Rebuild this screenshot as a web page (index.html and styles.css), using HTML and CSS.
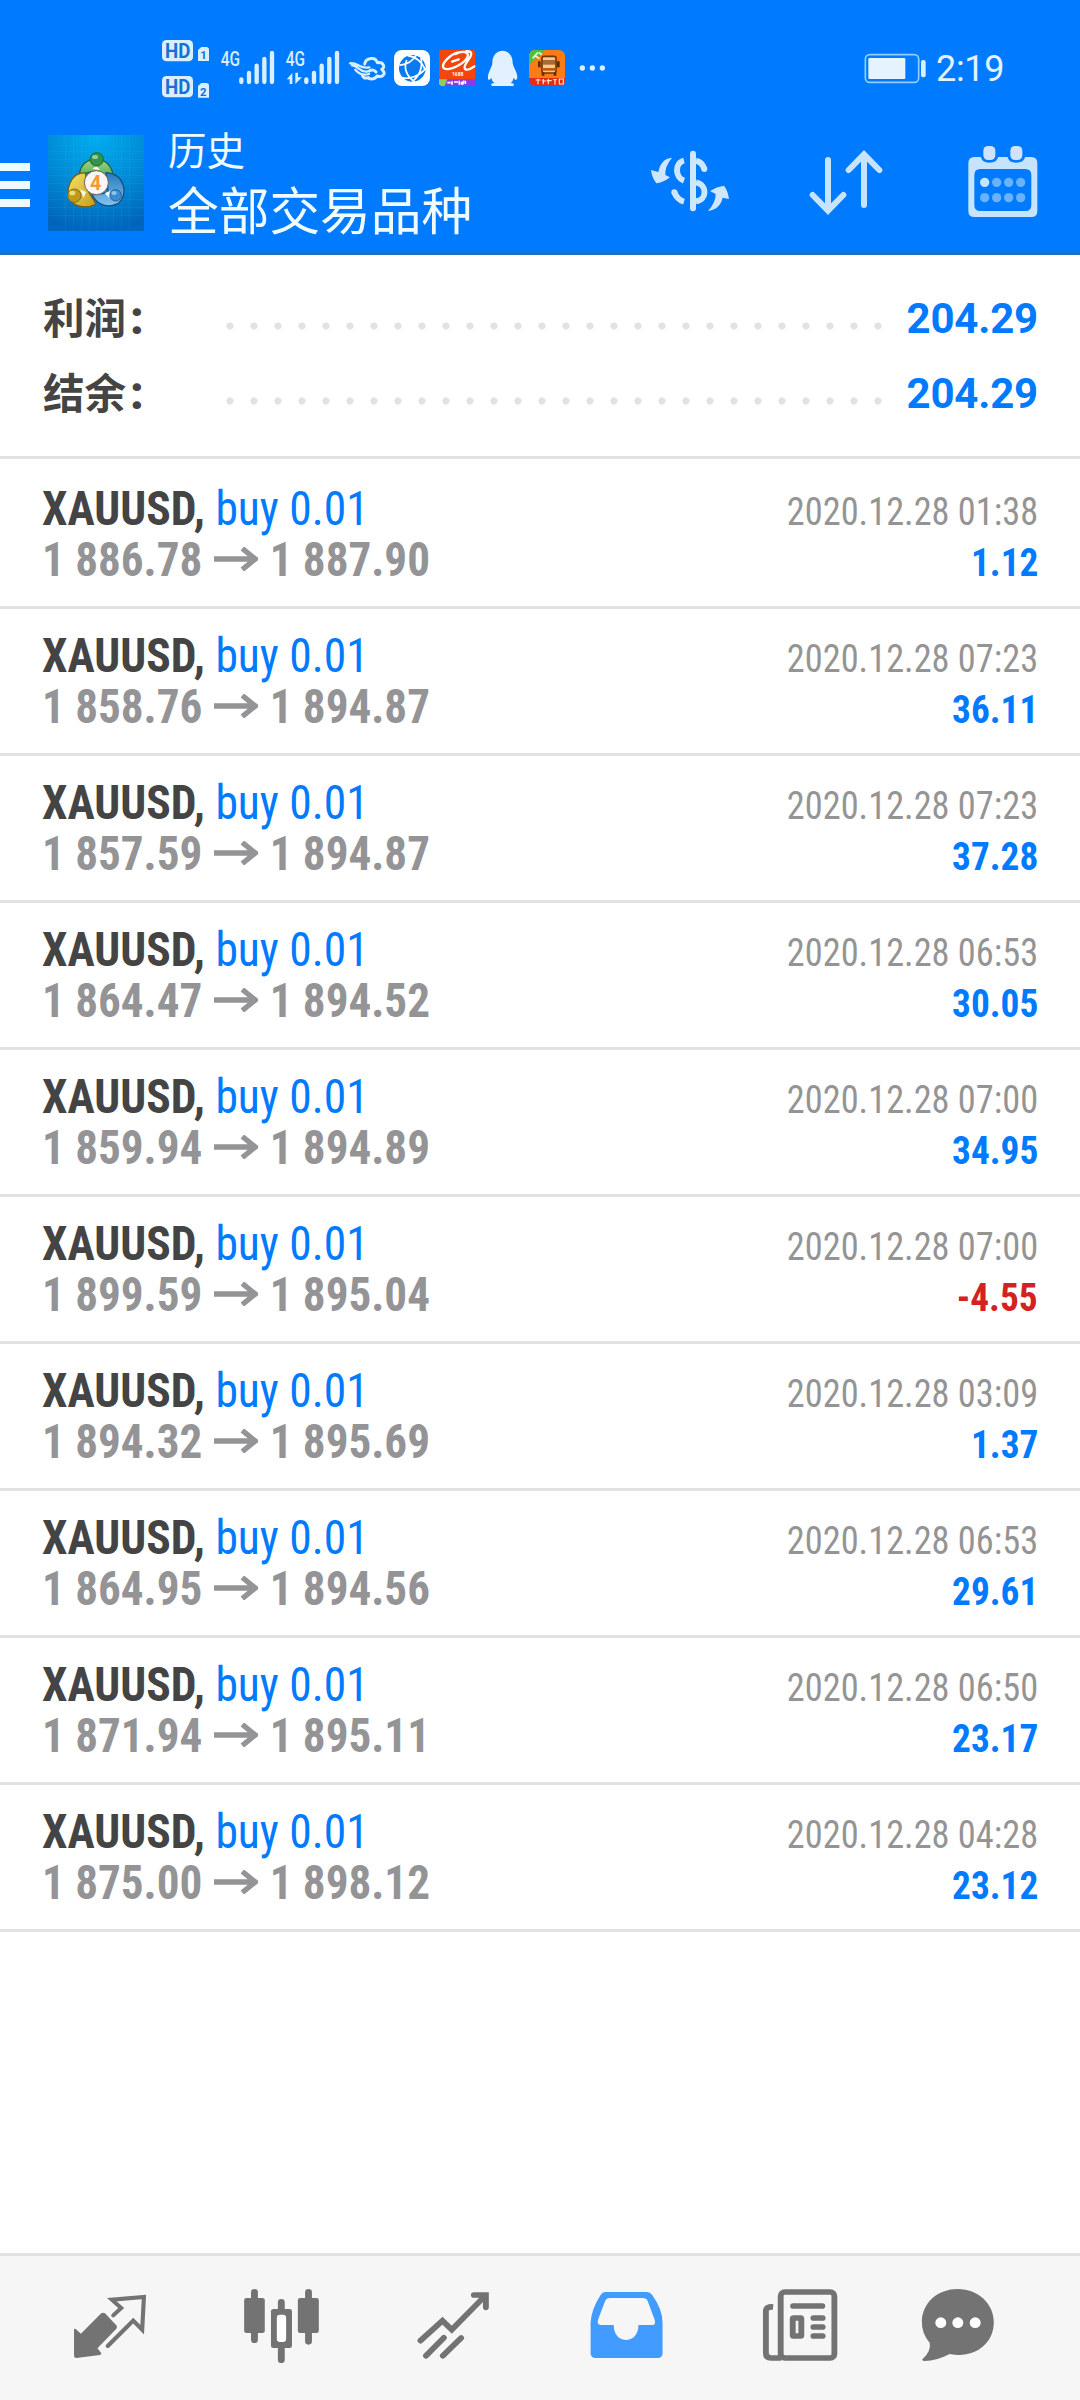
FILE: index.html
```html
<!DOCTYPE html>
<html lang="zh-CN">
<head>
<meta charset="utf-8">
<title>历史</title>
<link rel="stylesheet" href="styles.css">
</head>
<body>
<svg width="0" height="0" class="defs"><symbol id="arrow" viewBox="0 0 45 24" preserveAspectRatio="none"><path d="M0 12H41M28.500 1.500L41.500 12L28.500 22.500" fill="none" stroke="#949497" stroke-width="5.400"/></symbol></svg>
<header class="top">
  <div class="status">
    <svg class="st-hd" width="53" height="80" viewBox="30 0 159 240">
      <rect x="36" y="30" width="93" height="64" rx="13" fill="#d9efff"/>
      <rect x="36" y="138" width="93" height="64" rx="13" fill="#d9efff"/>
      <path d="M144 60l10-9h15q8 0 8 8v34h-33zM144 168l10-9h15q8 0 8 8v36h-33z" fill="#d9efff"/>
      <g class="hd-text"><text x="45" y="83" font-size="58" textLength="76" lengthAdjust="spacingAndGlyphs">HD</text><text x="45" y="191" font-size="58" textLength="76" lengthAdjust="spacingAndGlyphs">HD</text><text x="151" y="88" font-size="34">1</text><text x="150" y="197" font-size="34">2</text></g>
    </svg>
    <svg class="st-sig1" width="58" height="80" viewBox="204 0 174 240">
      <text class="net" x="212" y="107" font-size="60" textLength="58" lengthAdjust="spacingAndGlyphs">4G</text>
      <path class="bars" d="M274 148v8M297 129v27M320 107v49M343 87v69M366 69v87"/>
    </svg>
    <svg class="st-sig2" width="57" height="80" viewBox="402 0 171 240">
      <text class="net" x="407" y="107" font-size="60" textLength="58" lengthAdjust="spacingAndGlyphs">4G</text>
      <path class="bars" d="M469 148v8M492 129v27M515 107v49M538 87v69M561 69v87"/>
      <path d="M410 148l17-19v33h-8v-14zM436 128h8v14l12 0l-20 20z" fill="#d9efff"/>
    </svg>
    <svg class="st-wing" width="38" height="80" viewBox="594 0 114 240" fill="none" stroke="#d9efff" stroke-width="7" stroke-linecap="round" stroke-linejoin="round">
      <path d="M600 100c25-3 30 19 58 12M606 106c20 0 22 24 48 18M616 119c12 14 24 18 41 13"/>
      <path d="M644 102c4-18 32-24 38-4c20-4 24 16 13 20c15 12 4 26-14 20c-7 12-24 10-26 5c-11 4-18-2-18-8M658 123c8-5 15-3 20 3" stroke-width="9"/>
    </svg>
    <svg class="st-web" width="38" height="80" viewBox="159 0 114 240">
      <rect x="162" y="60" width="108" height="108" rx="24" fill="#fff"/>
      <circle cx="217" cy="115" r="40" fill="#0a7af0"/>
      <path d="M178 106c22-2 42-14 52-32M203 77c25 3 45 20 52 42M186 143c22 6 50-4 72-28M200 90c-9 24 0 48 24 66M243 84c6 30-6 56-26 70" fill="none" stroke="#fff" stroke-width="5"/>
    </svg>
    <svg class="st-ali" width="38" height="80" viewBox="294 0 114 240">
      <rect x="297" y="60" width="109" height="90" rx="8" fill="#f4460c"/>
      <path d="M297 148h109v12q0 8-8 8h-93q-8 0-8-8z" fill="#8a3be2"/><path d="M297 148h25l-8 20h-10q-7-2-7-8z" fill="#8fce5c"/>
      <path d="M352 68c-22 6-44 30-43 42c2 12 30 9 56-10c22-16 24-32 8-34c-8-1-18 1-26 6M378 64c18-2 20 8 8 24c-10 14-16 24-11 29c6 5 18-1 28-8M336 95l20-7" fill="none" stroke="#fff" stroke-width="7" stroke-linecap="round"/>
      <text x="336" y="139" font-size="18" font-weight="700" fill="#fff" textLength="34" lengthAdjust="spacingAndGlyphs">1688</text>
      <path d="M322 158h10m4-4v10m6-8h12m4-4v12m7-9v9m6-12l-3 12m8-12v10" stroke="#fff" stroke-width="5"/>
    </svg>
    <svg class="st-qq" width="31" height="80" viewBox="441 0 93 240">
      <path d="M457 98c0-48 61-48 61 0c0 10 14 28 14 42c0 10-5 14-11 3c-2 9-5 13-9 16q14 1 8 9h-64q-8-8 8-9c-5-3-8-7-10-16c-7 12-12 6-10-5c2-15 13-29 13-40z" fill="#e2f0ff"/>
    </svg>
    <svg class="st-truck" width="38" height="80" viewBox="564 0 114 240">
      <rect x="567" y="60" width="108" height="108" rx="18" fill="#fb7c14"/>
      <path d="M567 105V80q0-20 18-20h31z" fill="#55bd3c"/><path d="M578 85l16-18M584 76l14 10M597 67l8 7" stroke="#e9ffcf" stroke-width="5"/>
      <rect x="606" y="79" width="42" height="50" rx="6" fill="#f8c98a" stroke="#743307" stroke-width="5"/>
      <path d="M609 90h36v14h-36z" fill="#a8683a"/><path d="M598 94v18M655 94v18M609 128v9M645 128v9" stroke="#5d2b0d" stroke-width="8"/><path d="M606 118h42" stroke="#c4550b" stroke-width="8"/>
      <path d="M567 144h108v10q-3 14-18 14h-72q-16-2-18-14z" fill="#e42c13"/>
      <path d="M587 150h15m-8-4v17m16-16v16m-4-10h12m7-7v17m-5-11h15m5-3h10m-5 0v15m13-17h12v15h-12z" fill="none" stroke="#ffe5d0" stroke-width="3.5"/>
    </svg>
    <svg class="st-more" width="28" height="80" viewBox="717 0 84 240" fill="#d9efff"><circle cx="727" cy="114" r="8"/><circle cx="757" cy="114" r="8"/><circle cx="787" cy="114" r="8"/></svg>
    <svg class="st-batt" width="63" height="80" viewBox="72 -30 189 240">
      <rect x="76" y="44" width="160" height="83" rx="13" fill="none" stroke="#8fd0ff" stroke-width="5"/>
      <rect x="85" y="54" width="111" height="63" rx="4" fill="#e5f2ff"/><rect x="243" y="60" width="14" height="52" rx="6" fill="#d9efff"/>
    </svg>
    <span class="clock">2:19</span>
  </div>
  <div class="bar">
    <svg class="menu" width="30" height="96" viewBox="0 0 30 96"><path d="M0 32h30M0 50h30M0 68h30" stroke="#edfaff" stroke-width="8"/></svg>
    <svg class="logo" width="96" height="96" viewBox="144 75 288 288">
      <defs>
        <radialGradient id="sky" cx=".5" cy="0" r="1"><stop offset="0" stop-color="#00aef0"/><stop offset=".6" stop-color="#0087d2"/><stop offset="1" stop-color="#0065bb"/></radialGradient>
        <linearGradient id="grn" x2="0" y2="1"><stop offset="0" stop-color="#9ed887"/><stop offset="1" stop-color="#2e9541"/></linearGradient>
        <linearGradient id="yel" x2="1" y2="1"><stop offset="0" stop-color="#f4e36c"/><stop offset="1" stop-color="#c79c16"/></linearGradient>
        <linearGradient id="blu" x2="0" y2="1"><stop offset="0" stop-color="#2679bd"/><stop offset="1" stop-color="#7fc6f0"/></linearGradient>
      </defs>
      <rect x="144" y="75" width="288" height="288" fill="url(#sky)"/>
      <path d="M144 125h288M144 149h288M144 173h288M144 197h288M144 221h288M144 245h288M144 269h288M144 293h288M144 317h288M196 75v288M220 75v288M244 75v288M268 75v288M292 75v288M316 75v288M340 75v288M364 75v288M388 75v288" stroke="#4cc5ff" stroke-opacity=".18" stroke-width="2"/>
      <path d="M239 196c-2-62 101-72 102 15l-20 18l-48-44z" fill="url(#grn)" stroke="#23652f" stroke-width="4"/>
      <path d="M318 188c58 4 68 67 37 92c-30 17-65 4-78-26l48-5z" fill="url(#blu)" stroke="#174f87" stroke-width="4"/>
      <path d="M256 188c-48 0-60 57-46 82c18 26 58 24 78 12l-22-36z" fill="url(#yel)" stroke="#756011" stroke-width="4"/>
      <path d="M277 177l12-9l12 12zM240 238l18 8l-7 18zM330 242l-16 8l14 14z" fill="#f6f8e9"/>
      <circle cx="290" cy="148" r="20" fill="#33924b" stroke="#226533" stroke-width="3"/><circle cx="223" cy="257" r="20" fill="#c09b1b" stroke="#846d18" stroke-width="3"/><circle cx="347" cy="256" r="17" fill="#3d8cd0" stroke="#205f9d" stroke-width="3"/>
      <ellipse cx="285" cy="141" rx="9" ry="6" fill="#8fd392"/><ellipse cx="217" cy="249" rx="9" ry="7" fill="#f1dc72"/><ellipse cx="342" cy="249" rx="8" ry="6" fill="#8bc8f1"/>
      <circle cx="289" cy="218" r="36" fill="#f7f7f7" stroke="#755b55" stroke-width="3"/>
      <text x="270" y="240" font-size="60" font-weight="700" fill="#f49a2d" textLength="34" lengthAdjust="spacingAndGlyphs">4</text>
    </svg>
    <div class="titles"><div class="sub">历史</div><div class="main">全部交易品种</div></div>
    <svg class="a-dollar" width="80" height="96" viewBox="90 45 240 288" fill="#cfe6ff">
      <path d="M219 101v164" stroke="#cfe6ff" stroke-width="18" stroke-linecap="round"/>
      <path d="M192 122C164 128 164 172 192 182M228 122q18 3 25 25M228 187c34 7 34 53 0 57M163 217q8 22 29 28" fill="none" stroke="#cfe6ff" stroke-width="18"/><circle cx="253" cy="147" r="9"/><circle cx="163" cy="217" r="9"/>
      <path d="M156 113C133 115 120 130 115 156L93 150Q96 174 109 190Q128 189 150 172L136 165Q134 140 156 113Z"/>
      <path d="M264 273C288 269 302 258 308 233L327 237Q324 213 312 197Q290 200 270 213L287 222Q288 246 264 273Z"/>
    </svg>
    <svg class="a-sort" width="76" height="96" viewBox="564 45 228 288" fill="none" stroke="#c6e3ff" stroke-width="18" stroke-linecap="round"><path d="M624 120v150M578 225l46 47l46-47M732 255V104M686 150l46-47l46 47"/></svg>
    <svg class="a-cal" width="72" height="96" viewBox="1040 45 216 288">
      <path fill-rule="evenodd" fill="#c6e3ff" d="M1062 111H1082Q1084 128 1107 128Q1131 128 1133 111H1162Q1164 128 1187 128Q1212 128 1214 111H1233Q1251 111 1251 129V273Q1251 291 1233 291H1062Q1044 291 1044 273V129Q1044 111 1062 111ZM1080 147Q1062 147 1062 165V255Q1062 273 1080 273H1215Q1233 273 1233 255V165Q1233 147 1215 147Z"/>
      <rect x="1089" y="78" width="36" height="42" rx="14" fill="#cfe3ff"/><rect x="1170" y="78" width="36" height="42" rx="14" fill="#cfe3ff"/>
      <g fill="#68b2ff"><circle cx="1093" cy="187" r="14" fill="#c6e3ff"/><circle cx="1129" cy="187" r="14"/><circle cx="1165" cy="187" r="14"/><circle cx="1201" cy="187" r="14"/><circle cx="1093" cy="233" r="14"/><circle cx="1129" cy="233" r="14"/><circle cx="1165" cy="233" r="14"/><circle cx="1201" cy="233" r="14"/></g>
    </svg>
  </div>
</header>
<section class="summary">
  <div class="sum"><span class="label">利润<b>:</b></span><i class="leader"></i><span class="total">204.29</span></div>
  <div class="sum"><span class="label">结余<b>:</b></span><i class="leader"></i><span class="total">204.29</span></div>
</section>
<main class="list">
  <article class="deal"><div class="line"><span class="name">XAUUSD, <em>buy 0.01</em></span><time>2020.12.28 01:38</time></div><div class="line"><span class="price">1 886.78 <svg class="to" role="img" aria-label="→"><use href="#arrow"/></svg> 1 887.90</span><span class="profit">1.12</span></div></article>
  <article class="deal"><div class="line"><span class="name">XAUUSD, <em>buy 0.01</em></span><time>2020.12.28 07:23</time></div><div class="line"><span class="price">1 858.76 <svg class="to" role="img" aria-label="→"><use href="#arrow"/></svg> 1 894.87</span><span class="profit">36.11</span></div></article>
  <article class="deal"><div class="line"><span class="name">XAUUSD, <em>buy 0.01</em></span><time>2020.12.28 07:23</time></div><div class="line"><span class="price">1 857.59 <svg class="to" role="img" aria-label="→"><use href="#arrow"/></svg> 1 894.87</span><span class="profit">37.28</span></div></article>
  <article class="deal"><div class="line"><span class="name">XAUUSD, <em>buy 0.01</em></span><time>2020.12.28 06:53</time></div><div class="line"><span class="price">1 864.47 <svg class="to" role="img" aria-label="→"><use href="#arrow"/></svg> 1 894.52</span><span class="profit">30.05</span></div></article>
  <article class="deal"><div class="line"><span class="name">XAUUSD, <em>buy 0.01</em></span><time>2020.12.28 07:00</time></div><div class="line"><span class="price">1 859.94 <svg class="to" role="img" aria-label="→"><use href="#arrow"/></svg> 1 894.89</span><span class="profit">34.95</span></div></article>
  <article class="deal"><div class="line"><span class="name">XAUUSD, <em>buy 0.01</em></span><time>2020.12.28 07:00</time></div><div class="line"><span class="price">1 899.59 <svg class="to" role="img" aria-label="→"><use href="#arrow"/></svg> 1 895.04</span><span class="profit loss">-4.55</span></div></article>
  <article class="deal"><div class="line"><span class="name">XAUUSD, <em>buy 0.01</em></span><time>2020.12.28 03:09</time></div><div class="line"><span class="price">1 894.32 <svg class="to" role="img" aria-label="→"><use href="#arrow"/></svg> 1 895.69</span><span class="profit">1.37</span></div></article>
  <article class="deal"><div class="line"><span class="name">XAUUSD, <em>buy 0.01</em></span><time>2020.12.28 06:53</time></div><div class="line"><span class="price">1 864.95 <svg class="to" role="img" aria-label="→"><use href="#arrow"/></svg> 1 894.56</span><span class="profit">29.61</span></div></article>
  <article class="deal"><div class="line"><span class="name">XAUUSD, <em>buy 0.01</em></span><time>2020.12.28 06:50</time></div><div class="line"><span class="price">1 871.94 <svg class="to" role="img" aria-label="→"><use href="#arrow"/></svg> 1 895.11</span><span class="profit">23.17</span></div></article>
  <article class="deal"><div class="line"><span class="name">XAUUSD, <em>buy 0.01</em></span><time>2020.12.28 04:28</time></div><div class="line"><span class="price">1 875.00 <svg class="to" role="img" aria-label="→"><use href="#arrow"/></svg> 1 898.12</span><span class="profit">23.12</span></div></article>
</main>
<nav class="tabs">
  <svg viewBox="197.5 48 244 432" preserveAspectRatio="none">
    <path d="M294 220q6-4 11 0l34 37q2 5-1 9l-55 59l11 14q1 4-4 6l-68 9q-7 0-7-7v-78q1-5 5-2l15 14z" fill="#737373"/>
    <path d="M329 226l23-22l-27-25l93-8l-5 98l-26-27l-74 76" fill="none" stroke="#737373" stroke-width="12" stroke-linecap="round"/>
  </svg>
  <svg viewBox="697 48 244 432" preserveAspectRatio="none">
    <path d="M739 157v142M896 157v147M817 187v25M817 318v41" stroke="#737373" stroke-width="20" stroke-linecap="round"/>
    <rect x="709" y="174" width="60" height="105" rx="7" fill="#737373"/><rect x="865" y="174" width="61" height="105" rx="7" fill="#737373"/><rect x="787" y="207" width="61" height="117" rx="7" fill="#737373"/><rect x="804" y="224" width="27" height="82" rx="9" fill="#fff"/>
  </svg>
  <svg viewBox="1196.4 48 244 432" preserveAspectRatio="none" fill="none" stroke="#737373" stroke-width="17" stroke-linecap="round"><path d="M1221 302l64-60l27 27l98-103M1376 165h35v37"/><path d="M1237 347l52-54M1286 347l53-53" /></svg>
  <svg viewBox="127.8 48 244 432" preserveAspectRatio="none">
    <path fill-rule="evenodd" fill="#429cff" d="M190 156H310Q320 156 326 165Q356 208 356 248V340Q356 354 341 354H162Q147 354 147 340V248Q149 208 176 165Q181 156 190 156ZM203 174Q193 174 189 184L169 238Q164 255 177 255H214C214 315 286 315 286 255H325Q338 255 333 239L313 184Q309 174 299 174Z"/>
  </svg>
  <svg viewBox="627.3 48 244 432" preserveAspectRatio="none" fill="none" stroke="#737373" stroke-width="17">
    <rect x="699" y="156" width="156" height="198" rx="12"/><path d="M677 201q-21-2-21 13v126q0 14 15 14h30"/>
    <path d="M735 198h85M794 234h27M794 261h27M794 288h27" stroke-linecap="round"/><rect x="734" y="234" width="25" height="54" rx="2"/>
  </svg>
  <svg class="last" viewBox="1092 48 244 432" preserveAspectRatio="none">
    <path d="M1213 147C1272 147 1318 190 1318 247C1318 314 1259 357 1190 342Q1150 363 1118 363Q1106 361 1112 356Q1136 334 1132 309Q1108 280 1109 243C1111 188 1155 147 1213 147Z" fill="#737373"/>
    <g fill="#fff"><circle cx="1164" cy="248" r="16"/><circle cx="1213.500" cy="248" r="16"/><circle cx="1264" cy="248" r="16"/></g>
  </svg>
</nav>
</body>
</html>
```
FILE: styles.css
```css
* { box-sizing: border-box; }
body { margin: 0; width: 1080px; height: 2400px; display: flex; flex-direction: column; background: #fff; font-family: "Roboto", "Noto Sans CJK SC", sans-serif; overflow: hidden; }
svg { display: block; flex: none; }
.top { height: 255px; background: #007aff; border-bottom: 3px solid #1670c8; }
.status { display: flex; height: 110px; padding: 30px 0 0 160px; }
.hd-text { font-weight: 700; fill: #1570d8; }
.net { font-weight: 500; fill: #d9efff; }
.bars { stroke: #d9efff; stroke-width: 13; stroke-linecap: round; }
.st-sig1 { margin-left: 5px; }
.st-sig2 { margin-left: 8px; }
.st-wing, .st-web, .st-ali { margin-left: 7px; }
.st-qq { margin-left: 11px; }
.st-truck { margin-left: 10px; }
.st-more { margin-left: 13px; }
.st-batt { margin-left: 257px; }
.clock { margin-left: 9px; font-size: 36px; line-height: 42px; padding-top: 18px; color: #e0f3ff; letter-spacing: -0.3px; }
.bar { display: flex; padding-top: 25px; height: 142px; }
.logo { margin-left: 18px; }
.titles { margin-left: 24px; width: 482px; color: #f0fbff; font-family: "Noto Sans CJK SC", sans-serif; }
.sub { font-size: 38.5px; line-height: 44px; margin-top: -9px; }
.main { font-size: 50.7px; line-height: 60px; margin-top: 8px; }
.a-sort { margin-left: 78px; }
.a-cal { margin-left: 83px; }
.summary { height: 204px; padding: 26px 42px 0 43px; border-bottom: 3px solid #e2e2e2; }
.sum { display: flex; height: 75px; line-height: 75px; }
.label { width: 175px; margin-top: -2px; font: 700 41.5px/75px "Noto Sans CJK SC", sans-serif; color: #444; }
.label b { font-family: "Roboto", sans-serif; font-size: 46px; line-height: 60px; margin-left: 4px; }
.leader { width: 672px; height: 8px; margin-top: 41px; background: radial-gradient(circle at center, #e2e2e2 3.2px, transparent 4px) 0 0 / 24px 8px; }
.total { margin-left: auto; font-size: 42px; font-weight: 700; color: #007aff; letter-spacing: -0.2px; }
.list { flex: 1; padding-top: 3px; }
.deal { height: 147px; padding: 21px 42px 0; border-bottom: 3px solid #e2e2e2; font-family: "Roboto Condensed", "Roboto", "Noto Sans CJK SC", sans-serif; font-stretch: 75%; }
.line { display: flex; justify-content: space-between; align-items: baseline; height: 51px; line-height: 51px; white-space: nowrap; }
.name, .price { transform-origin: 0 50%; }
time, .profit { transform-origin: 100% 50%; }
.name { font-size: 48px; font-weight: 700; color: #444; transform: scaleX(0.948); }
.name em { font-style: normal; font-weight: 400; color: #007aff; }
time { font-size: 39.5px; color: #949494; transform: scaleX(0.92); }
.price { font-size: 48px; font-weight: 700; color: #949497; transform: scaleX(0.94); }
.to { display: inline-block; width: 47.5px; height: 24px; margin: 0 0.8px 0 1.2px; vertical-align: 5px; }
.profit { font-size: 39.5px; font-weight: 700; color: #007aff; transform: scaleX(0.945); }
.profit.loss { color: #d32222; }
.defs { position: absolute; }
.tabs { display: flex; gap: 88px; height: 147px; padding-left: 68px; background: #f6f6f6; border-top: 3px solid #e2e2e2; }
.tabs svg { width: 84px; height: 144px; }
.tabs .last { margin-left: -12px; }
```
